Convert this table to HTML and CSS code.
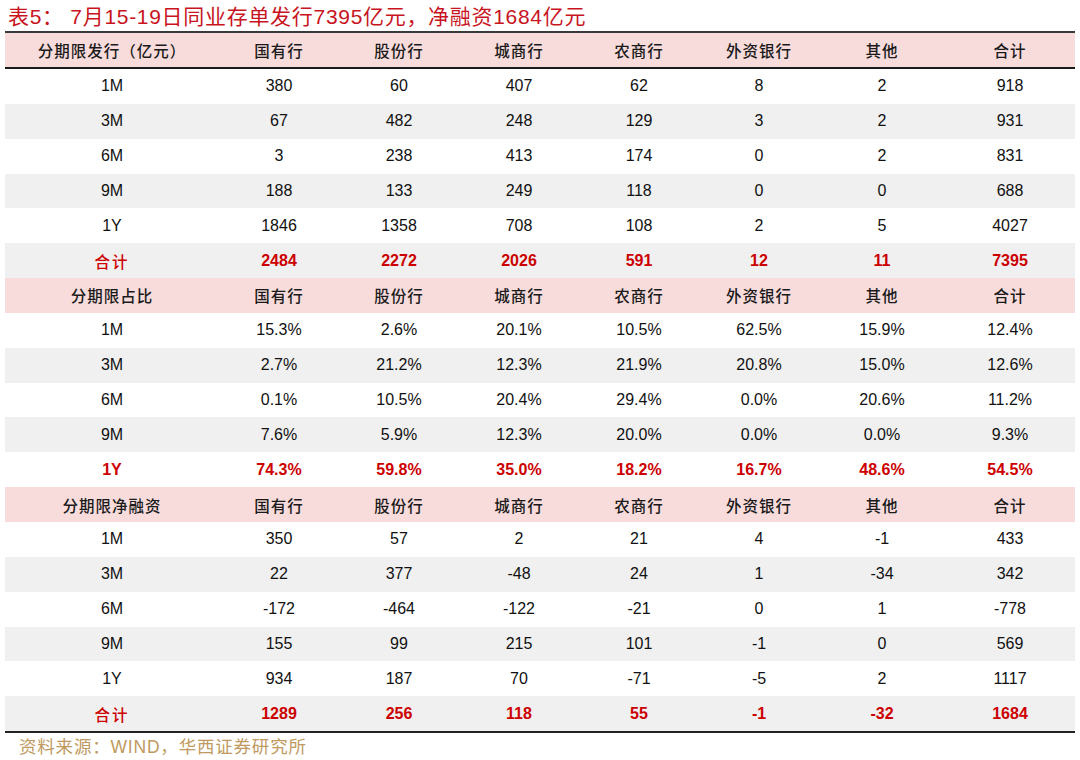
FILE: index.html
```html
<!DOCTYPE html>
<html lang="zh">
<head>
<meta charset="utf-8">
<link rel="stylesheet" href="styles.css">
</head>
<body>
<div class="page">
  <div class="title">表5：&nbsp;7月15-19日同业存单发行7395亿元，净融资1684亿元</div>
  <table class="tbl">
    <colgroup>
      <col class="c0"><col class="c"><col class="c"><col class="c"><col class="c"><col class="c"><col class="c6"><col class="c7">
    </colgroup>
    <tbody>
      <tr class="hd first"><td class="hl">分期限发行（亿元）</td><td>国有行</td><td>股份行</td><td>城商行</td><td>农商行</td><td>外资银行</td><td>其他</td><td>合计</td></tr>
      <tr class="w top"><td>1M</td><td>380</td><td>60</td><td>407</td><td>62</td><td>8</td><td>2</td><td>918</td></tr>
      <tr class="g"><td>3M</td><td>67</td><td>482</td><td>248</td><td>129</td><td>3</td><td>2</td><td>931</td></tr>
      <tr class="w"><td>6M</td><td>3</td><td>238</td><td>413</td><td>174</td><td>0</td><td>2</td><td>831</td></tr>
      <tr class="g"><td>9M</td><td>188</td><td>133</td><td>249</td><td>118</td><td>0</td><td>0</td><td>688</td></tr>
      <tr class="w"><td>1Y</td><td>1846</td><td>1358</td><td>708</td><td>108</td><td>2</td><td>5</td><td>4027</td></tr>
      <tr class="g tot"><td class="cn">合计</td><td>2484</td><td>2272</td><td>2026</td><td>591</td><td>12</td><td>11</td><td>7395</td></tr>
      <tr class="hd"><td class="hl">分期限占比</td><td>国有行</td><td>股份行</td><td>城商行</td><td>农商行</td><td>外资银行</td><td>其他</td><td>合计</td></tr>
      <tr class="w"><td>1M</td><td>15.3%</td><td>2.6%</td><td>20.1%</td><td>10.5%</td><td>62.5%</td><td>15.9%</td><td>12.4%</td></tr>
      <tr class="g"><td>3M</td><td>2.7%</td><td>21.2%</td><td>12.3%</td><td>21.9%</td><td>20.8%</td><td>15.0%</td><td>12.6%</td></tr>
      <tr class="w"><td>6M</td><td>0.1%</td><td>10.5%</td><td>20.4%</td><td>29.4%</td><td>0.0%</td><td>20.6%</td><td>11.2%</td></tr>
      <tr class="g"><td>9M</td><td>7.6%</td><td>5.9%</td><td>12.3%</td><td>20.0%</td><td>0.0%</td><td>0.0%</td><td>9.3%</td></tr>
      <tr class="w tot"><td>1Y</td><td>74.3%</td><td>59.8%</td><td>35.0%</td><td>18.2%</td><td>16.7%</td><td>48.6%</td><td>54.5%</td></tr>
      <tr class="hd"><td class="hl">分期限净融资</td><td>国有行</td><td>股份行</td><td>城商行</td><td>农商行</td><td>外资银行</td><td>其他</td><td>合计</td></tr>
      <tr class="w"><td>1M</td><td>350</td><td>57</td><td>2</td><td>21</td><td>4</td><td>-1</td><td>433</td></tr>
      <tr class="g"><td>3M</td><td>22</td><td>377</td><td>-48</td><td>24</td><td>1</td><td>-34</td><td>342</td></tr>
      <tr class="w"><td>6M</td><td>-172</td><td>-464</td><td>-122</td><td>-21</td><td>0</td><td>1</td><td>-778</td></tr>
      <tr class="g"><td>9M</td><td>155</td><td>99</td><td>215</td><td>101</td><td>-1</td><td>0</td><td>569</td></tr>
      <tr class="w"><td>1Y</td><td>934</td><td>187</td><td>70</td><td>-71</td><td>-5</td><td>2</td><td>1117</td></tr>
      <tr class="g tot last"><td class="cn">合计</td><td>1289</td><td>256</td><td>118</td><td>55</td><td>-1</td><td>-32</td><td>1684</td></tr>
    </tbody>
  </table>
  <div class="src">资料来源：WIND，华西证券研究所</div>
</div>
</body>
</html>
```
FILE: styles.css
```css
html, body {
  margin: 0;
  padding: 0;
  background: #ffffff;
}
.page {
  width: 1080px;
  height: 760px;
  padding: 5px 5px 0 5px;
  box-sizing: border-box;
  font-family: "Liberation Sans", Arial, "Noto Sans CJK SC", sans-serif;
}
.title {
  height: 26px;
  line-height: 24px;
  padding-left: 3px;
  font-size: 21px;
  letter-spacing: 0.7px;
  color: #c8141e;
  font-family: "Liberation Sans", Arial, "Noto Sans CJK SC", sans-serif;
  white-space: nowrap;
}
.tbl {
  width: 1070px;
  border-collapse: collapse;
  table-layout: fixed;
  border-top: 2px solid #3a3a3a;
  border-bottom: 2px solid #222222;
}
.c0 { width: 214px; }
.c { width: 120px; }
.c6 { width: 126px; }
.c7 { width: 130px; }
.tbl td {
  height: 34.85px;
  padding: 0;
  text-align: center;
  vertical-align: middle;
  font-size: 16px;
  color: #111111;
  white-space: nowrap;
}
.tbl tr.hd td {
  background: #f8dcdc;
  font-family: "Noto Sans CJK SC", sans-serif;
  font-weight: 500;
  font-size: 15.5px;
  letter-spacing: 1px;
  color: #1a1a1a;
}
.tbl tr.first td {
  height: 34px;
  border-bottom: 2px solid #1a1a1a;
}
.tbl tr.w td { background: #ffffff; }
.tbl tr.g td { background: #f0f0f0; }
.tbl tr.tot td {
  color: #cc0000;
  font-weight: bold;
}
.tbl tr.tot td.cn {
  font-family: "Noto Sans CJK SC", sans-serif;
  font-weight: 500;
  font-size: 15.5px;
  letter-spacing: 2px;
}
.src {
  padding-left: 14px;
  margin-top: 0;
  font-size: 17.5px;
  letter-spacing: 0.8px;
  color: #c09a60;
  font-family: "Liberation Sans", Arial, "Noto Sans CJK SC", sans-serif;
  white-space: nowrap;
}
```
